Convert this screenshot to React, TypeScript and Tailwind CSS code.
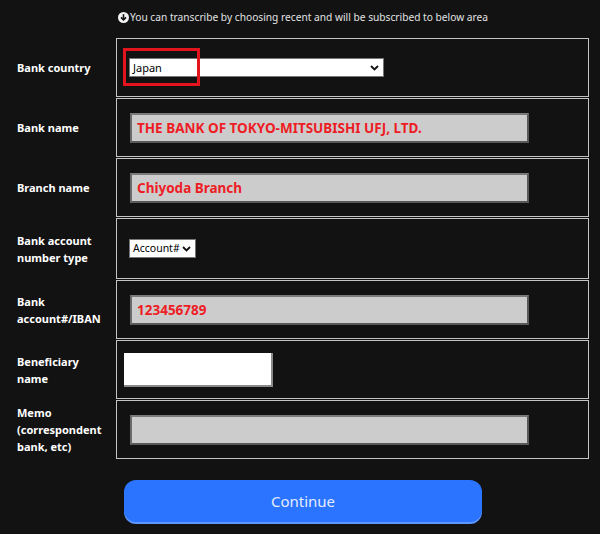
import React from "react";

const labelCls =
  "w-[116px] shrink-0 pl-[17px] pr-1 flex items-center text-white font-bold text-[11px] leading-[17px]";
const cellCls =
  "relative flex-1 flex items-center border border-[#c4c4c4]";
const grayInput =
  "w-[399px] h-[30px] ml-[13px] bg-[#cccccc] border-2 border-[#595959] border-t-[#7a7a7a] border-l-[#6a6a6a] pl-[5px] text-[#ee1c25] font-bold text-[13.5px] outline-none";

function FakeSelect({ w, text, size }: { w: string; text: string; size: string }) {
  return (
    <div
      role="combobox"
      className={`ml-[12px] ${w} h-[19px] flex items-center justify-between bg-white text-black ${size} border border-[#767676] pl-[3px] pr-[4px]`}
    >
      <span className="leading-[17px] whitespace-nowrap">{text}</span>
      <svg width="9" height="6" viewBox="0 0 9 6" className="shrink-0">
        <path d="M1 1L4.5 4.5L8 1" stroke="#111" strokeWidth="1.8" fill="none" />
      </svg>
    </div>
  );
}

function Row({
  label,
  h,
  children,
}: {
  label: React.ReactNode;
  h: string;
  children?: React.ReactNode;
}) {
  return (
    <div className={`flex ${h}`}>
      <div className={labelCls}>{label}</div>
      <div className={cellCls}>{children}</div>
    </div>
  );
}

export default function App() {
  return (
    <div
      className="w-[600px] h-[534px] bg-[#121212] overflow-hidden"
      style={{ fontFamily: '"Noto Sans", "Liberation Sans", sans-serif' }}
    >
      <div className="h-[38px] flex items-start pt-[9px] pl-[118px]">
        <div className="flex items-center gap-[1px] text-[10.2px] text-[#e2e2e2] leading-[16px]">
          <svg width="11" height="11" viewBox="0 0 11 11" className="shrink-0">
            <circle cx="5.5" cy="5.5" r="5.5" fill="#f2f2f2" />
            <path d="M5.5 2.2V7.6" stroke="#121212" strokeWidth="1.6" />
            <path
              d="M3 5.4L5.5 7.9L8 5.4"
              stroke="#121212"
              strokeWidth="1.6"
              fill="none"
            />
          </svg>
          <span>You can transcribe by choosing recent and will be subscribed to below area</span>
        </div>
      </div>

      <div className="flex flex-col gap-[1px] w-[589px]">
        <Row label="Bank country" h="h-[59px]">
          <FakeSelect w="w-[255px]" text="Japan" size="text-[11px]" />
          <div className="absolute left-[6px] top-[9px] w-[77px] h-[38px] border-[3px] border-[#e3141d]" />
        </Row>
        <Row label="Bank name" h="h-[59px]">
          <input
            readOnly
            className={grayInput}
            value="THE BANK OF TOKYO-MITSUBISHI UFJ, LTD."
          />
        </Row>
        <Row label="Branch name" h="h-[59px]">
          <input readOnly className={grayInput} value="Chiyoda Branch" />
        </Row>
        <Row
          label={
            <span>
              Bank account
              <br />
              number type
            </span>
          }
          h="h-[61px]"
        >
          <FakeSelect w="w-[67px]" text="Account#" size="text-[10.5px]" />
        </Row>
        <Row
          label={
            <span>
              Bank
              <br />
              account#/IBAN
            </span>
          }
          h="h-[59px]"
        >
          <input readOnly className={grayInput} value="123456789" />
        </Row>
        <Row
          label={
            <span>
              Beneficiary
              <br />
              name
            </span>
          }
          h="h-[59px]"
        >
          <div className="ml-[7px] w-[149px] h-[34px] bg-white border-b-2 border-r-2 border-[#8a8a8a]" />
        </Row>
        <Row
          label={
            <span>
              Memo
              <br />
              (correspondent
              <br />
              bank, etc)
            </span>
          }
          h="h-[59px]"
        >
          <input readOnly className={grayInput} value="" />
        </Row>
      </div>

      <div className="pl-[124px] pt-[21px]">
        <button className="w-[358px] h-[42px] rounded-[12px] bg-[#2a74ff] shadow-[0_2px_0_#5e97ff] text-[#e4ecff] text-[15px]">
          Continue
        </button>
      </div>
    </div>
  );
}
